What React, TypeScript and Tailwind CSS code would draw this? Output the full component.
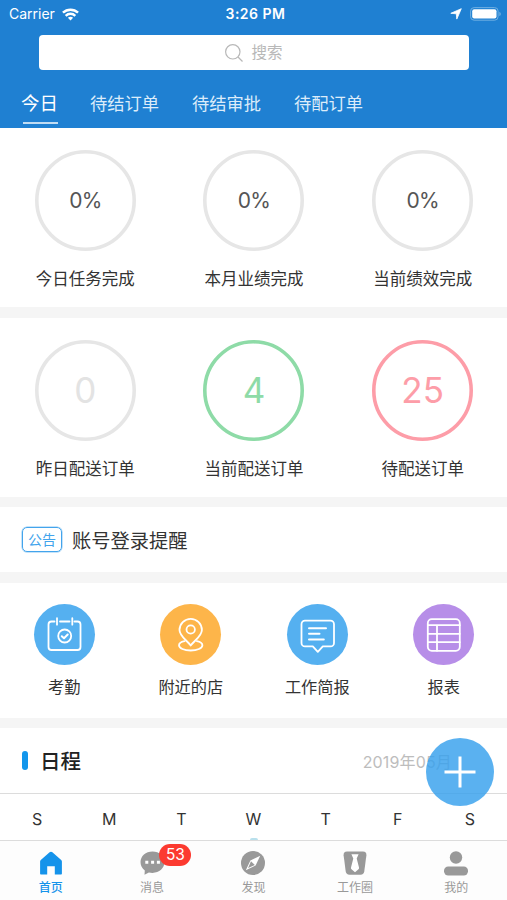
import type { ReactNode } from 'react';

interface Ring {
  value: string;
  label: string;
  className: string;
}

interface Shortcut {
  label: string;
  color: string;
  icon: ReactNode;
}

interface NavItem {
  label: string;
  icon: ReactNode;
  active?: boolean;
  badge?: number;
}

const tabs = ['待结订单', '待结审批', '待配订单'];
const weekDays = ['S', 'M', 'T', 'W', 'T', 'F', 'S'];

const progress: Ring[] = [
  { value: '0%', label: '今日任务完成', className: 'stroke-[#e6e6e6] text-[#555] text-[21px] tracking-[-0.8px]' },
  { value: '0%', label: '本月业绩完成', className: 'stroke-[#e6e6e6] text-[#555] text-[21px] tracking-[-0.8px]' },
  { value: '0%', label: '当前绩效完成', className: 'stroke-[#e6e6e6] text-[#555] text-[21px] tracking-[-0.8px]' },
];

const orders: Ring[] = [
  { value: '0', label: '昨日配送订单', className: 'stroke-[#e6e6e6] text-[#e3e3e3] text-[35px]' },
  { value: '4', label: '当前配送订单', className: 'stroke-[#8edba7] text-[#8edba7] text-[35px]' },
  { value: '25', label: '待配送订单', className: 'stroke-[#fd9da8] text-[#fd9da8] text-[35px]' },
];

const lineProps = {
  viewBox: '0 0 61 61',
  fill: 'none',
  stroke: '#fff',
  strokeWidth: 1.8,
  strokeLinecap: 'round' as const,
  strokeLinejoin: 'round' as const,
  className: 'size-full',
};

const shortcuts: Shortcut[] = [
  {
    label: '考勤',
    color: 'bg-[#55b0f0]',
    icon: (
      <svg {...lineProps}>
        <path d="M20.500 17.500h-3a3 3 0 0 0-3 3V43a3 3 0 0 0 3 3H43.500a3 3 0 0 0 3-3V20.500a3 3 0 0 0-3-3h-3M26 17.500h9.500M23 14.200v6.500M38.300 14.200v6.500" />
        <circle cx="30.700" cy="32" r="6.500" />
        <path d="m27.800 32.200 2.200 2 3.700-3.700" strokeWidth="2" />
      </svg>
    ),
  },
  {
    label: '附近的店',
    color: 'bg-[#fdb54a]',
    icon: (
      <svg {...lineProps}>
        <path d="M30.700 41.500C26.500 36 19.500 32 19.500 26a11.200 11.200 0 0 1 22.400 0c0 6-7 10-11.200 15.500Z" />
        <circle cx="30.700" cy="25.500" r="4.200" />
        <path d="M24.500 37.200c-3.300.7-5.500 2.200-5.500 4 0 3 5.200 5.300 11.700 5.300s11.700-2.300 11.700-5.300c0-1.800-2.200-3.300-5.500-4" />
      </svg>
    ),
  },
  {
    label: '工作简报',
    color: 'bg-[#55b0f0]',
    icon: (
      <svg {...lineProps}>
        <path d="M18 16.700h25.500a3.500 3.500 0 0 1 3.500 3.500v18.700a3.500 3.500 0 0 1-3.500 3.500h-7.700l-5 5.500-5-5.500H18a3.500 3.500 0 0 1-3.500-3.500V20.200a3.500 3.500 0 0 1 3.500-3.500Z" />
        <path d="M22 24.200h17M22 29.700h10.500M22 35.400h14.800" strokeWidth="2" />
      </svg>
    ),
  },
  {
    label: '报表',
    color: 'bg-[#b78ee8]',
    icon: (
      <svg {...lineProps}>
        <rect x="14.800" y="15.200" width="32" height="31.600" rx="4" />
        <path d="M15 21.200h31.800M15 29.800h31.800M15 38.200h31.800M24 21.200v25.600" />
      </svg>
    ),
  },
];

const navItems: NavItem[] = [
  {
    label: '首页',
    active: true,
    icon: (
      <path d="M12 .8a2 2 0 0 1 1.400.5l8.800 7.600c.5.400.7.900.7 1.500v12.400a.8.800 0 0 1-.8.800h-6.300v-8.400H8.200v8.400H1.900a.8.800 0 0 1-.8-.8V10.400c0-.6.2-1.100.7-1.500l8.800-7.600A2 2 0 0 1 12 .8Z" />
    ),
  },
  {
    label: '消息',
    badge: 53,
    icon: (
      <>
        <path d="M12.500.5c6.800 0 12 4.600 12 10.600s-5.200 10.800-12 10.800c-1.300 0-2.500-.2-3.600-.500L4.500 23.800l.300-4.300C2.100 17.600.5 14.600.5 11.100.5 5.100 5.700.5 12.500.5Z" />
        <path fill="#fff" d="M5.300 9.800h3v3h-3zM11.100 9.800h3v3h-3zM16.900 9.800h3v3h-3z" />
      </>
    ),
  },
  {
    label: '发现',
    icon: (
      <>
        <circle cx="12" cy="12" r="12" />
        <path fill="#fff" d="m19.200 4.800-4.600 9.800-9.800 4.600 4.600-9.800z" />
        <path d="m10 10.200 3.800 3.800-6.700 3z" />
      </>
    ),
  },
  {
    label: '工作圈',
    icon: (
      <>
        <path d="M4 .5h16c2.400 0 3.600 1.500 3.400 3.800l-2.100 15.900c-.3 2.200-1.600 3.500-3.800 3.500h-11c-2.200 0-3.500-1.300-3.800-3.500L.6 4.300C.4 2 1.600.5 4 .5Z" />
        <path fill="#fff" d="M8.400 3.200h7.200l-1.900 4.200 2.300 9c.2.700 0 1.400-.5 1.900L12 21.300l-3.500-3c-.5-.5-.7-1.200-.5-1.900l2.300-9z" />
      </>
    ),
  },
  {
    label: '我的',
    icon: (
      <>
        <circle cx="12" cy="6.500" r="6.200" />
        <rect x="0" y="15.500" width="24" height="9" rx="4.200" />
      </>
    ),
  },
];

function StatusBar() {
  return (
    <div className="grid h-7 grid-cols-3 items-center pr-[6px] pl-[9px] text-[14px] leading-7">
      <div className="flex items-center gap-[7px]">
        <span>Carrier</span>
        <svg viewBox="0 0 18 13" className="h-[13px] w-[17px]" fill="none" stroke="#fff" strokeWidth="2.600">
          <path d="M1 4.600c4.500-4.300 11.500-4.300 16 0M3.900 7.900c2.900-2.800 7.300-2.800 10.200 0" />
          <path d="M9 12.800 6.200 10c1.600-1.500 4-1.500 5.600 0z" fill="#fff" stroke="none" />
        </svg>
      </div>
      <span className="pl-px text-center font-semibold tracking-[0.5px]">3:26 PM</span>
      <div className="flex items-center justify-end gap-[8px]">
        <svg viewBox="0 0 12 12" className="size-[12px]" fill="#fff" stroke="#fff" strokeWidth=".8" strokeLinejoin="round">
          <path d="M11.300.7 6.800 11.100 6.300 5.800.8 5.300z" />
        </svg>
        <svg viewBox="0 0 31 14" className="h-[14px] w-[31px]">
          <rect x=".6" y=".6" width="27.500" height="12.600" rx="3.500" fill="none" stroke="#6fafe2" />
          <rect x="2.200" y="2.300" width="24.300" height="9.300" rx="2" fill="#fff" />
          <path d="M29.300 4.700c2 .8 2 3.600 0 4.400z" fill="#6fafe2" />
        </svg>
      </div>
    </div>
  );
}

function RingRow({ items }: { items: Ring[] }) {
  return (
    <div className="grid grid-cols-3 pl-[1px]">
      {items.map((item) => (
        <div key={item.label} className="flex flex-col items-center">
          <div className={`grid size-[101px] place-items-center ${item.className}`}>
            <svg viewBox="0 0 101 101" className="col-start-1 row-start-1 size-[101px]" fill="none" strokeWidth="3.600">
              <circle cx="50.500" cy="50.500" r="48.700" />
            </svg>
            <span className="col-start-1 row-start-1">{item.value}</span>
          </div>
          <span className="mt-[16px] text-[16.5px] leading-6">{item.label}</span>
        </div>
      ))}
    </div>
  );
}

export default function App() {
  return (
    <div className="flex h-[900px] w-[507px] flex-col overflow-hidden bg-[#f5f5f5] font-[Inter,'Noto_Sans_CJK_SC',sans-serif] text-[#333]">
      <header className="h-32 shrink-0 bg-[#1f80d2] text-white">
        <StatusBar />
        <div className="mt-[7px] mr-[38px] ml-[39px] flex h-[35px] items-center justify-center gap-[8px] rounded bg-white text-[#b8b8b8]">
          <svg viewBox="0 0 18 18" className="size-[18px]" fill="none" stroke="#b8b8b8" strokeWidth="1.200">
            <circle cx="7.800" cy="7.800" r="7.200" />
            <path d="m13 13 4.500 4.500" />
          </svg>
          <span className="text-[15.5px]">搜索</span>
        </div>
        <nav className="mt-[19px] flex items-start pl-[21px] leading-[29px]">
          <div className="flex w-[37px] flex-col items-center text-[18.5px]">
            <span>今日</span>
            <span className="mt-[4px] ml-[1px] h-[2px] w-[35px] bg-[#c0dcf3]" />
          </div>
          <div className="ml-8 flex gap-[33px] text-[17.25px] text-[#dcecfa]">
            {tabs.map((tab) => (
              <span key={tab}>{tab}</span>
            ))}
          </div>
        </nav>
      </header>

      <section className="h-[179px] shrink-0 bg-white pt-[22px]">
        <RingRow items={progress} />
      </section>

      <section className="mt-[11px] h-[179px] shrink-0 bg-white pt-[22px]">
        <RingRow items={orders} />
      </section>

      <section className="mt-[10px] flex h-[65px] shrink-0 items-center gap-[10px] bg-white pl-[22px]">
        <span className="flex h-[25px] w-10 items-center justify-center rounded-[5px] border-[1.5px] border-[#43a4ec] text-[14px] text-[#43a4ec] ring-[0.5px] ring-[#43a4ec]/60">
          公告
        </span>
        <span className="pt-[3px] text-[19.25px]">账号登录提醒</span>
      </section>

      <section className="mt-[11px] grid h-[135px] shrink-0 grid-cols-4 bg-white pl-[1px] pt-[21px]">
        {shortcuts.map((item) => (
          <div key={item.label} className="flex flex-col items-center">
            <div className={`size-[61px] rounded-full ${item.color}`}>{item.icon}</div>
            <span className="mt-[10px] text-[16.2px] leading-6">{item.label}</span>
          </div>
        ))}
      </section>

      <section className="relative mt-[10px] h-28 shrink-0 bg-white">
        <div className="flex h-[66px] items-center border-b border-[#dcdcdc] pr-[55px] pl-[22px]">
          <span className="h-[19px] w-[6px] rounded-full bg-[#1296ec]" />
          <span className="ml-[12px] pt-[4px] text-[20.5px] font-medium text-[#222]">日程</span>
          <span className="ml-auto pt-[2px] text-[16px] tracking-[0.15px] text-[#bdbdbd]">2019年05月</span>
        </div>
        <div className="grid h-[44px] grid-cols-7 items-center px-px pt-[5px] text-center text-[16px]">
          {weekDays.map((day, i) => (
            <span key={i}>{day}</span>
          ))}
        </div>
        <div className="mx-auto h-[2px] w-[8px] rounded-t-full bg-[#b9e0ec]" />
        <button className="absolute top-[10px] right-[13px] flex size-[68px] items-center justify-center rounded-full bg-[#38a1ed]/83">
          <svg viewBox="0 0 32 32" className="size-8" stroke="#fff" strokeWidth="3">
            <path d="M16 .5v31M.5 16h31" />
          </svg>
        </button>
      </section>

      <footer className="grid h-[60px] shrink-0 grid-cols-5 border-t border-[#dcdcdc] bg-[#fdfdfd] pt-[10px]">
        {navItems.map((item) => (
          <div
            key={item.label}
            className={`relative flex flex-col items-center ${item.active ? 'font-medium text-[#1593ea]' : 'text-[#999]'}`}
          >
            <svg viewBox="0 0 24 25" className="h-[25px] w-6 overflow-visible" fill="currentColor">
              {item.icon}
            </svg>
            <span className="mt-[3px] text-[12px] leading-[18px]">{item.label}</span>
            {item.badge && (
              <span className="absolute -top-[7px] left-[58px] flex h-[22px] w-8 items-center justify-center rounded-full bg-[#fc3a30] text-[15.5px] text-white">
                {item.badge}
              </span>
            )}
          </div>
        ))}
      </footer>
    </div>
  );
}
